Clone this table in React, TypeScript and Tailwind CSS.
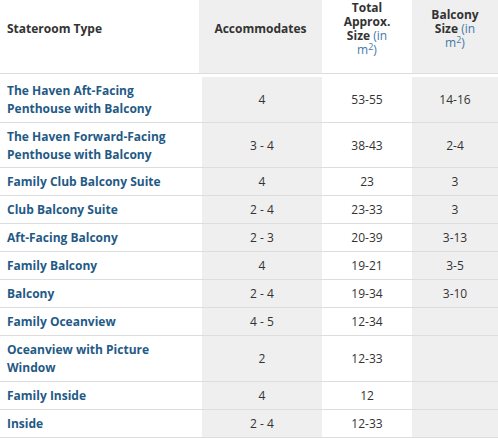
import React from "react";

type Row = { name: React.ReactNode; acc: string; size: string; balc: string; short?: boolean };

const rows: Row[] = [
  { name: <>The Haven Aft-Facing<br />Penthouse with Balcony</>, acc: "4", size: "53-55", balc: "14-16" },
  { name: <>The Haven Forward-Facing<br />Penthouse with Balcony</>, acc: "3 - 4", size: "38-43", balc: "2-4", short: true },
  { name: "Family Club Balcony Suite", acc: "4", size: "23", balc: "3" },
  { name: "Club Balcony Suite", acc: "2 - 4", size: "23-33", balc: "3" },
  { name: "Aft-Facing Balcony", acc: "2 - 3", size: "20-39", balc: "3-13" },
  { name: "Family Balcony", acc: "4", size: "19-21", balc: "3-5" },
  { name: "Balcony", acc: "2 - 4", size: "19-34", balc: "3-10" },
  { name: "Family Oceanview", acc: "4 - 5", size: "12-34", balc: "" },
  { name: <>Oceanview with Picture<br />Window</>, acc: "2", size: "12-33", balc: "" },
  { name: "Family Inside", acc: "4", size: "12", balc: "" },
  { name: "Inside", acc: "2 - 4", size: "12-33", balc: "" },
];

export default function App() {
  return (
    <div
      className="w-[498px] h-[438px] overflow-hidden bg-white text-[12px] text-[#333333]"
      style={{ fontFamily: '"Open Sans", "Noto Sans", sans-serif' }}
    >
      <div className="grid grid-cols-[199px_123px_90px_86px] h-[74px] border-b border-[#dddddd] font-bold leading-[14px]">
        <div className="flex items-center pl-[7px] pb-[15px]">Stateroom Type</div>
        <div className="flex items-center justify-center bg-[#efefef] pb-[15px]">Accommodates</div>
        <div className="flex items-center justify-center text-center pb-[15px]">
          <div>
            Total
            <br />
            Approx.
            <br />
            Size <span className="font-normal text-[#4479a8]">(in</span>
            <br />
            <span className="font-normal text-[#4479a8]">
              m<sup>2</sup>)
            </span>
          </div>
        </div>
        <div className="flex items-center justify-center text-center bg-[#efefef] pb-[15px]">
          <div>
            Balcony
            <br />
            Size <span className="font-normal text-[#4479a8]">(in</span>
            <br />
            <span className="font-normal text-[#4479a8]">
              m<sup>2</sup>)
            </span>
          </div>
        </div>
      </div>
      <div className="mt-[3px]">
        {rows.map((r, i) => (
          <div
            key={i}
            className="grid grid-cols-[202px_120px_90px_86px] border-b border-[#dddddd] leading-[18px]"
          >
            <div
              className={
                r.short
                  ? "pl-[7px] pt-[5px] pb-[3px] font-bold text-[#1f5a86]"
                  : "pl-[7px] pt-[5px] pb-[4px] font-bold text-[#1f5a86]"
              }
            >
              {r.name}
            </div>
            <div className="flex items-center justify-center bg-[#efefef] pt-[1px]">{r.acc}</div>
            <div className="flex items-center justify-center pt-[1px]">{r.size}</div>
            <div className="flex items-center justify-center bg-[#efefef] pt-[1px]">{r.balc}</div>
          </div>
        ))}
      </div>
    </div>
  );
}
